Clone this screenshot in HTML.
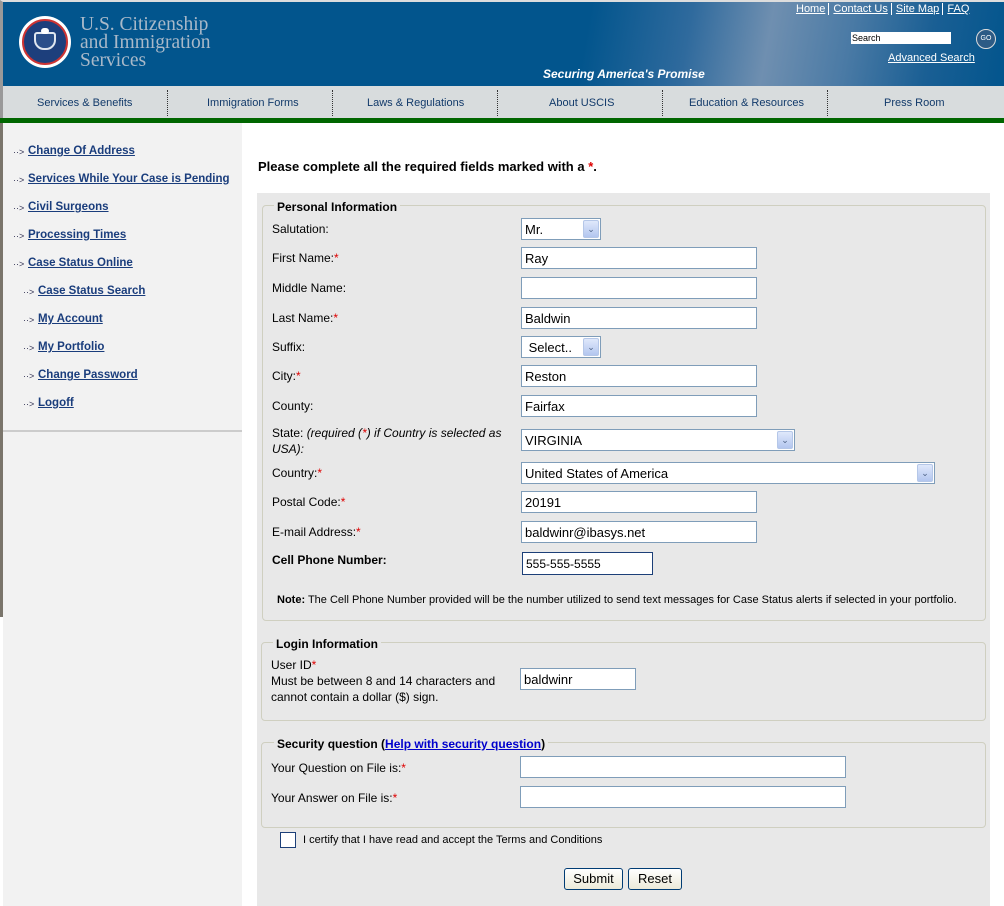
<!DOCTYPE html>
<html><head><meta charset="utf-8"><style>
*{box-sizing:border-box;margin:0;padding:0}
body{width:1004px;height:906px;overflow:hidden;background:#fff;font-family:"Liberation Sans",Arial,sans-serif;position:relative;font-size:12px;color:#000}
.a{position:absolute}
.hdr{left:0;top:0;width:1004px;height:86px;background:linear-gradient(100deg,#02558d 0%,#02558d 58%,#2f6a9d 68%,#6f8fb0 76%,#4a7aa5 84%,#1a5f94 92%,#02558d 100%);border-top:2px solid #ddd;border-left:3px solid #999}
.nav{left:0;top:86px;width:1004px;height:32px;background:#d8dcdd;border-left:3px solid #999}
.nav span{position:absolute;top:11px;font-size:11px;color:#123a6a;text-align:center}
.sep{position:absolute;top:4px;height:26px;border-left:1px dotted #333}
.green{left:0;top:118px;width:1004px;height:5px;background:#006600}
.side{left:3px;top:123px;width:239px;height:783px;background:#f2f2f2}
.side a{position:absolute;font-size:11.5px;font-weight:bold;color:#1a3d7c;text-decoration:underline}
.arr{position:absolute;font-size:9px;color:#335}
.panel{left:257px;top:193px;width:733px;height:713px;background:#e8e8e8}
fieldset{position:absolute;border:1px solid #cfcfc0;border-radius:4px}
.lg{position:absolute;background:#e8e8e8;font-weight:bold;padding:0 3px;font-size:12px}
.l{position:absolute;left:272px;font-size:12px}
.r{color:#d00}
.in{position:absolute;background:#fff;border:1px solid #7f9db9;height:22px;font-size:13px;padding:3px 0 0 3px}
.dd{position:absolute;right:1px;top:1px;width:16px;height:18px;background:linear-gradient(#dfe8fb,#b3c6ef);border:1px solid #b5c7e8;border-radius:2px;font-size:9px;color:#4d6185;text-align:center;line-height:17px}
.btn{position:absolute;top:868px;height:22px;border:1px solid #003c74;border-radius:3px;background:linear-gradient(#fff,#ece9d8);font-size:13px;text-align:center;padding-top:2px}
</style></head><body>
<div class="a hdr"></div>
<div class="a" style="left:19px;top:16px;width:52px;height:52px;border-radius:50%;background:#fff;"><div style="position:absolute;left:3px;top:3px;width:46px;height:46px;border-radius:50%;background:#1d3f7c;border:2px solid #c33"></div><div style="position:absolute;left:15px;top:16px;width:22px;height:18px;background:#2b4f8a;border:2px solid #dfe6ef;border-radius:3px 3px 10px 10px"></div><div style="position:absolute;left:22px;top:12px;width:8px;height:6px;background:#fff;border-radius:3px"></div></div>
<div class="a" style="left:80px;top:16px;font-family:'Liberation Serif',serif;font-size:19.5px;line-height:18px;color:#a9b9c9">U.S. Citizenship<br>and Immigration<br>Services</div>
<div class="a" style="left:796px;top:3px;font-size:11px;color:#fff"><u>Home</u> <span style="border-left:1px solid #fff;padding-left:4px"><u>Contact Us</u></span> <span style="border-left:1px solid #fff;padding-left:4px"><u>Site Map</u></span> <span style="border-left:1px solid #fff;padding-left:4px"><u>FAQ</u></span></div>
<div class="a" style="left:851px;top:32px;width:100px;height:12px;background:#fff;font-size:9px;line-height:12px;padding-left:1px">Search</div>
<div class="a" style="left:976px;top:29px;width:20px;height:20px;border-radius:50%;border:1px solid #ddd;background:#2d5b85;color:#fff;font-size:7px;line-height:18px;text-align:center">GO</div>
<div class="a" style="left:888px;top:52px;font-size:11px;color:#fff;text-decoration:underline">Advanced Search</div>
<div class="a" style="left:543px;top:67px;font-size:12px;font-weight:bold;font-style:italic;color:#fff">Securing America's Promise</div>
<div class="a nav">
<span style="left:34px">Services &amp; Benefits</span><div class="sep" style="left:164px"></div>
<span style="left:204px">Immigration Forms</span><div class="sep" style="left:329px"></div>
<span style="left:364px">Laws &amp; Regulations</span><div class="sep" style="left:494px"></div>
<span style="left:546px">About USCIS</span><div class="sep" style="left:659px"></div>
<span style="left:686px">Education &amp; Resources</span><div class="sep" style="left:824px"></div>
<span style="left:881px">Press Room</span>
</div>
<div class="a green"></div>
<div class="a" style="left:0;top:123px;width:3px;height:494px;background:#7a756b"></div>
<div class="a side">
<span class="arr" style="left:10px;top:24px">··&gt;</span><a style="left:25px;top:22px">Change Of Address</a>
<span class="arr" style="left:10px;top:52px">··&gt;</span><a style="left:25px;top:50px">Services While Your Case is Pending</a>
<span class="arr" style="left:10px;top:80px">··&gt;</span><a style="left:25px;top:78px">Civil Surgeons</a>
<span class="arr" style="left:10px;top:108px">··&gt;</span><a style="left:25px;top:106px">Processing Times</a>
<span class="arr" style="left:10px;top:136px">··&gt;</span><a style="left:25px;top:134px">Case Status Online</a>
<span class="arr" style="left:20px;top:164px">··&gt;</span><a style="left:35px;top:162px">Case Status Search</a>
<span class="arr" style="left:20px;top:192px">··&gt;</span><a style="left:35px;top:190px">My Account</a>
<span class="arr" style="left:20px;top:220px">··&gt;</span><a style="left:35px;top:218px">My Portfolio</a>
<span class="arr" style="left:20px;top:248px">··&gt;</span><a style="left:35px;top:246px">Change Password</a>
<span class="arr" style="left:20px;top:276px">··&gt;</span><a style="left:35px;top:274px">Logoff</a>
<div style="position:absolute;left:0;top:307px;width:239px;height:2px;background:#ccc"></div>
</div>
<div class="a" style="left:258px;top:159px;font-size:13px;font-weight:bold">Please complete all the required fields marked with a <span class="r">*</span>.</div>
<div class="a panel"></div>
<fieldset style="left:262px;top:205px;width:724px;height:416px"></fieldset>
<div class="lg" style="left:274px;top:200px">Personal Information</div>
<div class="l" style="top:222px">Salutation:</div>
<div class="in" style="left:521px;top:218px;width:80px">Mr.<div class="dd">&#8964;</div></div>
<div class="l" style="top:251px">First Name:<span class="r">*</span></div>
<div class="in" style="left:521px;top:247px;width:236px">Ray</div>
<div class="l" style="top:281px">Middle Name:</div>
<div class="in" style="left:521px;top:277px;width:236px"></div>
<div class="l" style="top:311px">Last Name:<span class="r">*</span></div>
<div class="in" style="left:521px;top:307px;width:236px">Baldwin</div>
<div class="l" style="top:340px">Suffix:</div>
<div class="in" style="left:521px;top:336px;width:80px">&nbsp;Select..<div class="dd">&#8964;</div></div>
<div class="l" style="top:369px">City:<span class="r">*</span></div>
<div class="in" style="left:521px;top:365px;width:236px">Reston</div>
<div class="l" style="top:399px">County:</div>
<div class="in" style="left:521px;top:395px;width:236px">Fairfax</div>
<div class="l" style="top:425px;line-height:16px">State: <i>(required (<span class="r">*</span>) if Country is selected as<br>USA):</i></div>
<div class="in" style="left:521px;top:429px;width:274px">VIRGINIA<div class="dd">&#8964;</div></div>
<div class="l" style="top:466px">Country:<span class="r">*</span></div>
<div class="in" style="left:521px;top:462px;width:414px">United States of America<div class="dd">&#8964;</div></div>
<div class="l" style="top:495px">Postal Code:<span class="r">*</span></div>
<div class="in" style="left:521px;top:491px;width:236px">20191</div>
<div class="l" style="top:525px">E-mail Address:<span class="r">*</span></div>
<div class="in" style="left:521px;top:521px;width:236px">baldwinr@ibasys.net</div>
<div class="l" style="top:553px;font-weight:bold">Cell Phone Number:</div>
<div class="in" style="left:522px;top:552px;width:131px;height:23px;border:1px solid #1c3f78;font-size:12px;padding-top:4px">555-555-5555</div>
<div class="a" style="left:277px;top:594px;font-size:11px"><b>Note:</b> The Cell Phone Number provided will be the number utilized to send text messages for Case Status alerts if selected in your portfolio.</div>
<fieldset style="left:261px;top:642px;width:725px;height:79px"></fieldset>
<div class="lg" style="left:273px;top:637px">Login Information</div>
<div class="l" style="left:271px;top:657px;line-height:16px">User ID<span class="r">*</span><br>Must be between 8 and 14 characters and<br>cannot contain a dollar ($) sign.</div>
<div class="in" style="left:520px;top:668px;width:116px">baldwinr</div>
<fieldset style="left:261px;top:742px;width:725px;height:86px"></fieldset>
<div class="lg" style="left:274px;top:737px">Security question (<a style="color:#00c;text-decoration:underline">Help with security question</a>)</div>
<div class="l" style="left:271px;top:761px">Your Question on File is:<span class="r">*</span></div>
<div class="in" style="left:520px;top:756px;width:326px"></div>
<div class="l" style="left:271px;top:791px">Your Answer on File is:<span class="r">*</span></div>
<div class="in" style="left:520px;top:786px;width:326px"></div>
<div class="a" style="left:280px;top:832px;width:16px;height:16px;border:1px solid #1c3f78;background:#fff"></div>
<div class="a" style="left:303px;top:834px;font-size:11px">I certify that I have read and accept the Terms and Conditions</div>
<div class="btn" style="left:564px;width:59px">Submit</div>
<div class="btn" style="left:628px;width:54px">Reset</div>
</body></html>
